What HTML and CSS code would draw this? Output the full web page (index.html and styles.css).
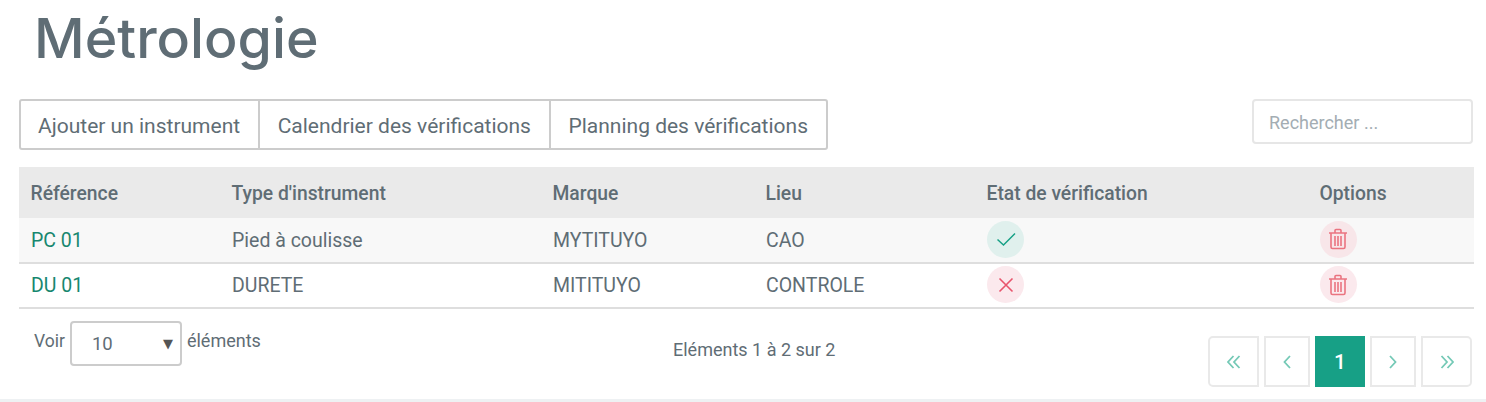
FILE: index.html
```html
<!DOCTYPE html>
<html lang="fr">
<head>
<meta charset="utf-8">
<title>Métrologie</title>
<link rel="stylesheet" href="styles.css">
</head>
<body>
<main class="page">
  <h1 class="title">Métrologie</h1>
  <div class="toolbar">
    <div class="btn-group">
      <a class="btn">Ajouter un instrument</a>
      <a class="btn">Calendrier des vérifications</a>
      <a class="btn">Planning des vérifications</a>
    </div>
    <input class="search" type="text" placeholder="Rechercher ...">
  </div>
  <table class="grid">
    <colgroup>
      <col class="c1"><col class="c2"><col class="c3"><col class="c4"><col class="c5"><col class="c6">
    </colgroup>
    <thead>
      <tr><th>Référence</th><th>Type d'instrument</th><th>Marque</th><th>Lieu</th><th>Etat de vérification</th><th>Options</th></tr>
    </thead>
    <tbody>
      <tr class="odd">
        <td class="ref">PC 01</td><td>Pied à coulisse</td><td>MYTITUYO</td><td>CAO</td>
        <td><span class="round ok"><svg viewBox="0 0 20 20" class="ico"><path d="M1.500 10.500 L7.500 16 L19 4.500" fill="none" stroke="#17a086" stroke-width="1.500"/></svg></span></td>
        <td><span class="round del"><svg viewBox="0 0 20 22" class="trash"><path d="M0 5h18M6 5V2.500Q6 1.500 7 1.500h4Q12 1.500 12 2.500V5M2 5v14q0 1.500 1.500 1.500h11q1.500 0 1.500-1.500V5M6 8v10M9 8v10M12 8v10" fill="none" stroke="#ea7480" stroke-width="1.600"/></svg></span></td>
      </tr>
      <tr>
        <td class="ref">DU 01</td><td>DURETE</td><td>MITITUYO</td><td>CONTROLE</td>
        <td><span class="round bad"><svg viewBox="0 0 20 20" class="ico"><path d="M3.500 3.500L16.500 16.500M16.500 3.500L3.500 16.500" fill="none" stroke="#e8546c" stroke-width="1.600"/></svg></span></td>
        <td><span class="round del"><svg viewBox="0 0 20 22" class="trash"><path d="M0 5h18M6 5V2.500Q6 1.500 7 1.500h4Q12 1.500 12 2.500V5M2 5v14q0 1.500 1.500 1.500h11q1.500 0 1.500-1.500V5M6 8v10M9 8v10M12 8v10" fill="none" stroke="#ea7480" stroke-width="1.600"/></svg></span></td>
      </tr>
    </tbody>
  </table>
  <div class="footer">
    <div class="length">
      <span class="voir">Voir</span>
      <div class="select"><span>10</span><span class="arrow">▼</span></div>
      <span>éléments</span>
    </div>
    <div class="info">Eléments 1 à 2 sur 2</div>
    <nav class="pager">
      <a class="page-btn first"><svg viewBox="0 0 14 14" class="chev"><path d="M6.500 1L1 7L6.500 13M12.500 1L7 7L12.500 13"/></svg></a>
      <a class="page-btn narrow"><svg viewBox="0 0 14 14" class="chev"><path d="M10 1L4.500 7L10 13"/></svg></a>
      <a class="page-btn current">1</a>
      <a class="page-btn narrow"><svg viewBox="0 0 14 14" class="chev"><path d="M4 1L9.500 7L4 13"/></svg></a>
      <a class="page-btn last"><svg viewBox="0 0 14 14" class="chev"><path d="M1.500 1L7 7L1.500 13M7.500 1L13 7L7.500 13"/></svg></a>
    </nav>
  </div>
</main>
</body>
</html>
```
FILE: styles.css
```css
* { box-sizing: border-box; }
html, body { margin: 0; padding: 0; }
body {
  width: 1486px;
  height: 402px;
  overflow: hidden;
  background: #eef1f3;
  font-family: Roboto, "Liberation Sans", sans-serif;
  color: #5f6d75;
}
.page {
  background: #fff;
  height: 399px;
  padding: 0 12px 0 19px;
}
.title {
  margin: 0;
  padding: 4px 0 0 15px;
  height: 99px;
  font-family: Inter, Lato, sans-serif;
  font-weight: 450;
  font-size: 55.500px;
  line-height: 68px;
  color: #5f6d75;
}
.toolbar {
  display: flex;
  justify-content: space-between;
  align-items: flex-start;
  height: 68px;
  padding-right: 1px;
}
.btn-group { display: flex; height: 51px; }
.btn {
  display: flex;
  align-items: center;
  padding: 2px 18px 0 17.500px;
  border: 2px solid #ccc;
  margin-left: -2px;
  font-size: 21px;
  color: #5f6d75;
}
.btn:first-child { margin-left: 0; padding-left: 17px; border-radius: 3px 0 0 3px; }
.btn:last-child { padding-right: 17.500px; border-radius: 0 3px 3px 0; }
.search {
  width: 221px;
  height: 45px;
  border: 2px solid #e6e6e6;
  border-radius: 4px;
  padding: 2px 15px 0;
  font: 18px Roboto, sans-serif;
  color: #5f6d75;
  background: #fff;
  outline: none;
}
.search::placeholder { color: #a3adb3; opacity: 1; }
.grid {
  width: 1455px;
  border-collapse: collapse;
  table-layout: fixed;
  font-size: 19.500px;
}
.c1 { width: 201px; } .c2 { width: 321px; } .c3 { width: 213px; }
.c4 { width: 221px; } .c5 { width: 333px; } .c6 { width: 166px; }
.grid th {
  height: 51px;
  padding: 1px 12px 0 11.500px;
  background: #eaeaea;
  font-size: 19.300px;
  font-weight: 500;
  text-align: left;
  color: #5f6d75;
}
.grid td {
  height: 45px;
  padding: 0 12px;
  border-bottom: 2px solid #dedede;
  vertical-align: middle;
}
.odd td { background: #f8f8f8; }
.grid td.ref { color: #17876f; }
.round {
  display: flex;
  align-items: center;
  justify-content: center;
  width: 37px;
  height: 37px;
  margin-bottom: 2px;
  border-radius: 50%;
}
.ok { background: #e0f0ed; }
.bad { background: #fbe9ed; }
.del { background: #fbe9ed; }
.odd .del { background: #f8e6e9; }
.ico { width: 20px; height: 20px; }
.trash { width: 20px; height: 22px; }
.footer {
  position: relative;
  display: flex;
  justify-content: space-between;
  padding-right: 2px;
}
.length {
  display: flex;
  align-items: flex-start;
  gap: 5px;
  margin: 12px 0 0 15px;
  font-size: 18px;
  line-height: 40px;
}
.voir { font-size: 17.500px; }
.select {
  display: flex;
  align-items: center;
  justify-content: space-between;
  width: 112px;
  height: 45px;
  padding: 0 7px 0 20px;
  border: 2px solid #ccc;
  border-radius: 4px;
  font-size: 18.500px;
}
.arrow { font-size: 13px; color: #555; font-family: "DejaVu Sans", sans-serif; }
.info {
  position: absolute;
  left: 654px;
  top: 28px;
  font-size: 18px;
  line-height: 26px;
}
.pager { display: flex; gap: 5px; margin-top: 27px; height: 51px; }
.page-btn {
  display: flex;
  align-items: center;
  justify-content: center;
  width: 46px;
  border: 2px solid #e9e9e9;
}
.page-btn.first { width: 51px; border-radius: 5px 0 0 5px; }
.page-btn.last { width: 51px; border-radius: 0 5px 5px 0; }
.page-btn.current {
  width: 50px;
  background: #17a086;
  border-color: #17a086;
  color: #fff;
  font-size: 21px;
  font-weight: 500;
}
.chev { width: 14px; height: 14px; fill: none; stroke: #74c9b6; stroke-width: 1.800; }
```
